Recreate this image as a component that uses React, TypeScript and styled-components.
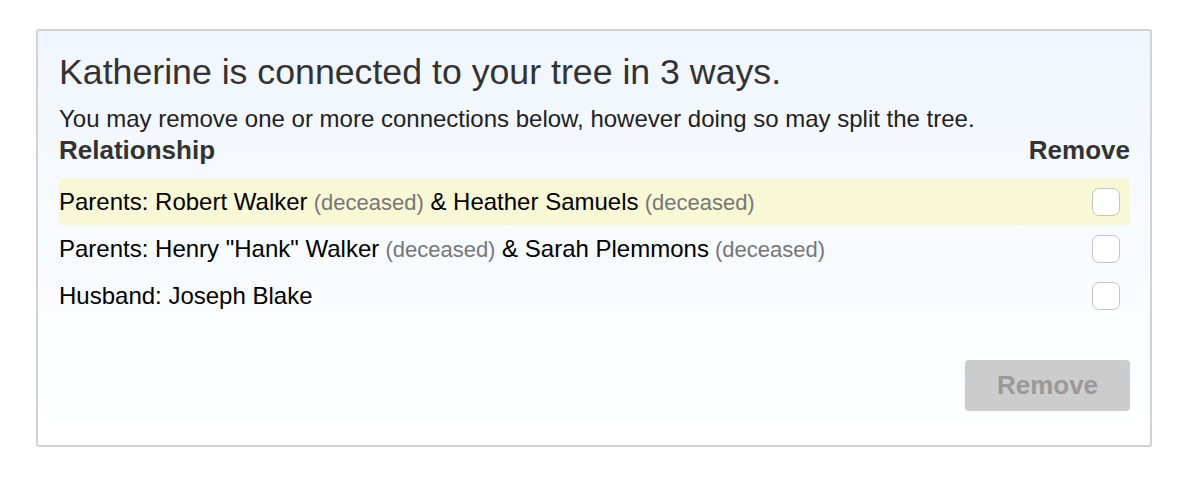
import styled, {createGlobalStyle} from 'styled-components';

const GlobalStyle = createGlobalStyle`
    body {
        margin: 0;
        background: #fff;
        font-family: "Liberation Sans", Arial, sans-serif;
    }
`;

interface Person {
    name: string;
    deceased?: boolean;
}

interface Connection {
    label: string;
    people: Person[];
}

const connections: Connection[] = [
    {label: 'Parents', people: [{name: 'Robert Walker', deceased: true}, {name: 'Heather Samuels', deceased: true}]},
    {label: 'Parents', people: [{name: 'Henry "Hank" Walker', deceased: true}, {name: 'Sarah Plemmons', deceased: true}]},
    {label: 'Husband', people: [{name: 'Joseph Blake'}]},
];

const App = () => {
    return <Page>
        <GlobalStyle/>
        <Panel>
            <Title>Katherine is connected to your tree in 3 ways.</Title>
            <Desc>You may remove one or more connections below, however doing so may split the tree.</Desc>

            <HeaderRow>
                <HeaderCell>Relationship</HeaderCell>
                <HeaderCell>Remove</HeaderCell>
            </HeaderRow>

            <List>
                {connections.map((row, index) => {
                    return <Row key={`conn_${index}`} isActive={index === 0}>
                        <span>
                            {row.label}:{' '}
                            {row.people.map((person, pIndex) => {
                                return <span key={`p_${pIndex}`}>
                                    {pIndex > 0 && ' & '}
                                    {person.name}
                                    {person.deceased && <Deceased> (deceased)</Deceased>}
                                </span>;
                            })}
                        </span>
                        <Checkbox/>
                    </Row>;
                })}
            </List>

            <Footer>
                <RemoveButton disabled>Remove</RemoveButton>
            </Footer>
        </Panel>
    </Page>;
};

export default App;


const Page = styled.div`
    padding: 29px 0 0 36px;
    width: 1116px;
`;

const Panel = styled.div`
    box-sizing: border-box;
    height: 418px;
    border: 2px solid #d2d2d2;
    border-radius: 3px;
    background: linear-gradient(to bottom, #f0f6fd 0%, #ffffff 100%);
    padding: 21px 20px 0 21px;
    display: flex;
    flex-direction: column;
`;

const Title = styled.div`
    font-size: 35.7px;
    color: #333;
    line-height: 40px;
`;

const Desc = styled.div`
    font-size: 24px;
    color: #222;
    line-height: 28px;
    margin-top: 13px;
`;

const HeaderRow = styled.div`
    display: flex;
    justify-content: space-between;
    align-items: flex-end;
    margin-top: 2px;
`;

const HeaderCell = styled.div`
    font-size: 26px;
    font-weight: bold;
    color: #333;
    line-height: 30px;
`;

const List = styled.div`
    display: flex;
    flex-direction: column;
    margin-top: 13px;
`;

const Row = styled.div<{isActive?: boolean}>`
    display: flex;
    justify-content: space-between;
    align-items: center;
    height: 47px;
    font-size: 24px;
    color: #000;
    background: ${props => props.isActive ? '#f8f8d6' : 'transparent'};
    padding-right: 10px;
`;

const Deceased = styled.span`
    color: #777;
    font-size: 22px;
`;

const Checkbox = styled.span`
    box-sizing: border-box;
    width: 28px;
    height: 28px;
    border: 1px solid #c4c4c4;
    border-radius: 7px;
    background: #fff;
`;

const Footer = styled.div`
    display: flex;
    justify-content: flex-end;
    margin-top: 41px;
`;

const RemoveButton = styled.button`
    width: 165px;
    height: 51px;
    border: none;
    border-radius: 4px;
    background: #cccccc;
    color: #999;
    font-family: "Liberation Sans", Arial, sans-serif;
    font-size: 26px;
    font-weight: bold;
`;
